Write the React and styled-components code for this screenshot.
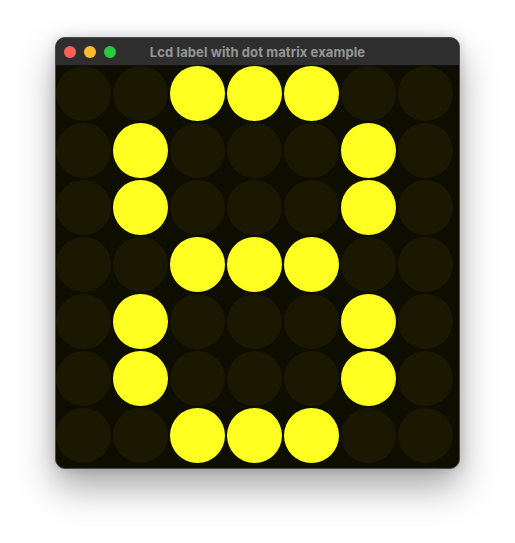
import React from 'react';
import styled, { createGlobalStyle } from 'styled-components';

const GlobalStyle = createGlobalStyle`
  html, body {
    margin: 0;
    padding: 0;
    background: #ffffff;
  }
  body {
    font-family: Inter, "Liberation Sans", Arial, sans-serif;
  }
`;

const Page = styled.div`
  width: 515px;
  height: 543px;
  padding: 37px 0 0 55px;
  box-sizing: border-box;
`;

const Window = styled.div`
  width: 405px;
  height: 432px;
  box-sizing: border-box;
  border: 1px solid #4a4a4a;
  border-radius: 10px;
  overflow: hidden;
  background: #0d0d00;
  box-shadow: 0 18px 36px rgba(0, 0, 0, 0.35), 0 0 12px rgba(0, 0, 0, 0.15);
  display: flex;
  flex-direction: column;
`;

const TitleBar = styled.div`
  height: 28px;
  flex-shrink: 0;
  background: #2e2e2e;
  border-bottom: 1px solid #111;
  box-sizing: border-box;
  display: grid;
  grid-template-columns: 1fr auto 1fr;
  align-items: center;
  padding: 0 8px;
`;

const Lights = styled.div`
  display: flex;
  gap: 8px;
`;

const Light = styled.span`
  width: 12px;
  height: 12px;
  border-radius: 50%;
  background: ${p => p.$color};
`;

const Title = styled.div`
  font-size: 13px;
  font-weight: 700;
  letter-spacing: 0.1px;
  color: #969696;
  white-space: nowrap;
`;

const Matrix = styled.div`
  display: grid;
  grid-template-columns: repeat(7, 55px);
  grid-auto-rows: 55px;
  gap: 2px;
`;

const Dot = styled.div`
  width: 55px;
  height: 55px;
  border-radius: 50%;
  background: ${p => (p.$on ? '#ffff22' : '#1a1800')};
`;

const pattern = [
  '..###..',
  '.#...#.',
  '.#...#.',
  '..###..',
  '.#...#.',
  '.#...#.',
  '..###..',
];

export default function App() {
  return (
    <Page>
      <GlobalStyle />
      <Window>
        <TitleBar>
          <Lights>
            <Light $color="#fe5f57" />
            <Light $color="#febc2e" />
            <Light $color="#28c840" />
          </Lights>
          <Title>Lcd label with dot matrix example</Title>
          <span />
        </TitleBar>
        <Matrix>
          {pattern.map((row, r) =>
            row.split('').map((c, i) => <Dot key={r + '-' + i} $on={c === '#'} />)
          )}
        </Matrix>
      </Window>
    </Page>
  );
}
